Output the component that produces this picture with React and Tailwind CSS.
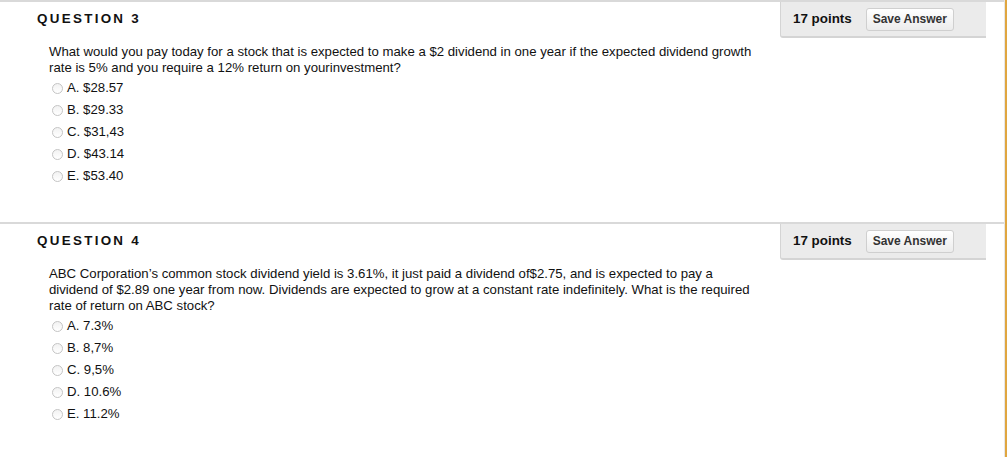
import React from "react";

const font = { fontFamily: '"Liberation Sans", Arial, Helvetica, sans-serif' };

function Radio() {
  return (
    <span className="inline-block w-[11px] h-[11px] rounded-full border border-[#c4c4c4] bg-gradient-to-b from-[#f2f2f2] to-white shrink-0" />
  );
}

function Question({ num, lines, options }) {
  return (
    <div className="border-t-2 border-[#d9d9d9] h-[222px]">
      <div className="flex justify-between">
        <div className="pl-[37px] pt-[7px] text-[13.4px] font-bold tracking-[2.3px] text-[#111]">
          QUESTION {num}
        </div>
        <div className="w-[206px] h-[36px] bg-[#ebebeb] border-l border-b-2 border-[#d4d4d4] rounded-bl-[3px] flex items-center pl-[12px] mr-[18px]">
          <span className="text-[13.4px] font-bold text-[#111]">17 points</span>
          <button className="ml-[14px] w-[88px] h-[23px] text-[12px] font-bold text-[#333] border border-[#cfcfcf] rounded-[3px] bg-gradient-to-b from-white to-[#ececec]">
            Save Answer
          </button>
        </div>
      </div>
      <div className="pl-[49px] pt-[6px] text-[13.2px] leading-[16px] text-[#111]">
        {lines.map((l, i) => (
          <div key={i}>{l}</div>
        ))}
      </div>
      <div className="pl-[52px] pt-[4px] flex flex-col gap-[6px]">
        {options.map((o, i) => (
          <label key={i} className="flex items-center gap-[4px] h-[16px] text-[13.2px] text-[#111]">
            <Radio />
            <span>{o}</span>
          </label>
        ))}
      </div>
    </div>
  );
}

export default function App() {
  return (
    <div className="w-[1007px] h-[457px] bg-white overflow-hidden flex" style={font}>
      <div className="w-[1004px]">
        <Question
          num={3}
          lines={[
            "What would you pay today for a stock that is expected to make a $2 dividend in one year if the expected dividend growth",
            "rate is 5% and you require a 12% return on yourinvestment?",
          ]}
          options={["A. $28.57", "B. $29.33", "C. $31,43", "D. $43.14", "E. $53.40"]}
        />
        <Question
          num={4}
          lines={[
            "ABC Corporation\u2019s common stock dividend yield is 3.61%, it just paid a dividend of$2.75, and is expected to pay a",
            "dividend of $2.89 one year from now. Dividends are expected to grow at a constant rate indefinitely. What is the required",
            "rate of return on ABC stock?",
          ]}
          options={["A. 7.3%", "B. 8,7%", "C. 9,5%", "D. 10.6%", "E. 11.2%"]}
        />
      </div>
      <div className="w-[1px] bg-[#e6e6e6]" />
      <div className="w-[2px] bg-[#e0a640]" />
    </div>
  );
}
